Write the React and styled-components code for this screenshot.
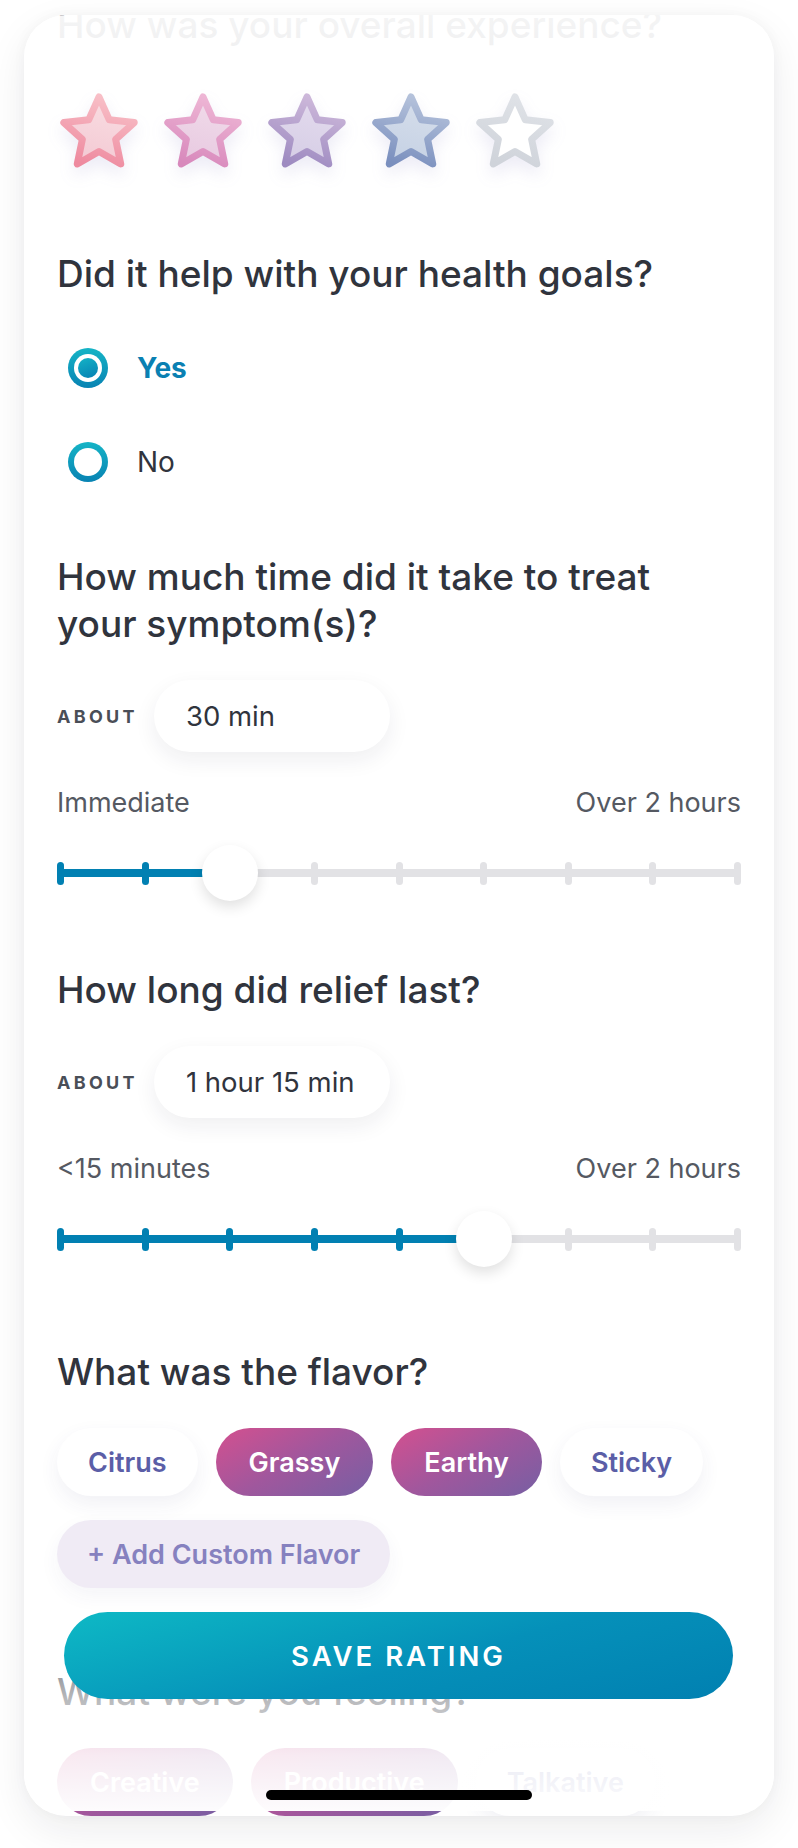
import React from 'react'
import styled, { createGlobalStyle } from 'styled-components'

const GlobalStyle = createGlobalStyle`
  html, body {
    margin: 0;
    padding: 0;
    background: #ffffff;
  }
  body {
    font-family: Inter, "Noto Sans", "Liberation Sans", sans-serif;
    color: #30343d;
    -webkit-font-smoothing: antialiased;
  }
  * { box-sizing: border-box; }
`

const BLUE = '#0180b2'
const GREY = '#e2e2e5'

const stars = [
  { stroke: ['#f8bfc7', '#ee8a9f'], fill: ['#f9dde2', '#f3c9d3'] },
  { stroke: ['#eeb6d5', '#d889bc'], fill: ['#f1dbea', '#e7c9e0'] },
  { stroke: ['#cdb8da', '#9e8bc1'], fill: ['#e4dbee', '#d5cde5'] },
  { stroke: ['#b5c2db', '#7a8fbe'], fill: ['#d6deeb', '#c5d1e4'] },
  { stroke: ['#dfe2e7', '#cfd3da'], fill: ['#ffffff', '#ffffff'] },
]

const starPoints = (cx, cy, R, r) => {
  const pts = []
  for (let i = 0; i < 10; i++) {
    const rad = i % 2 === 0 ? R : r
    const a = (Math.PI / 5) * i
    pts.push(`${(cx + rad * Math.sin(a)).toFixed(2)},${(cy - rad * Math.cos(a)).toFixed(2)}`)
  }
  return pts.join(' ')
}

const flavors = [
  { name: 'Citrus', on: false },
  { name: 'Grassy', on: true },
  { name: 'Earthy', on: true },
  { name: 'Sticky', on: false },
]

const feelings = [
  { name: 'Creative', on: true },
  { name: 'Productive', on: true },
  { name: 'Talkative', on: false },
]

const Star = ({ idx, colors }) => (
  <StarSvg width="78" height="76" viewBox="0 0 78 76">
    <defs>
      <linearGradient id={`st${idx}`} x1="0.6" y1="0" x2="0.3" y2="1">
        <stop offset="0" stopColor={colors.stroke[0]} />
        <stop offset="1" stopColor={colors.stroke[1]} />
      </linearGradient>
      <linearGradient id={`sf${idx}`} x1="0.6" y1="0" x2="0.3" y2="1">
        <stop offset="0" stopColor={colors.fill[0]} />
        <stop offset="1" stopColor={colors.fill[1]} />
      </linearGradient>
    </defs>
    <polygon
      points={starPoints(39, 41, 37, 17.5)}
      fill={`url(#sf${idx})`}
      stroke={`url(#st${idx})`}
      strokeWidth="7"
      strokeLinejoin="round"
    />
  </StarSvg>
)

const Radio = ({ checked, label }) => (
  <Option>
    <RadioRing $checked={checked} />
    <OptionLabel $checked={checked}>{label}</OptionLabel>
  </Option>
)

const Slider = ({ value, steps = 9 }) => {
  const frac = value / (steps - 1)
  const pos = `calc(3.5px + (100% - 7px) * ${frac})`
  return (
    <SliderBox>
      <Ticks>
        <Fill style={{ width: pos }} />
        {Array.from({ length: steps }).map((_, i) => (
          <Tick key={i} $on={i <= value} />
        ))}
        <Thumb style={{ left: pos }} />
      </Ticks>
    </SliderBox>
  )
}

const TimeQuestion = ({ title, mt, amount, from, to, value }) => (
  <>
    <Heading $mt={mt}>{title}</Heading>
    <AboutRow>
      <AboutLabel>ABOUT</AboutLabel>
      <Pill>{amount}</Pill>
    </AboutRow>
    <RangeLabels>
      <span>{from}</span>
      <span>{to}</span>
    </RangeLabels>
    <Slider value={value} />
  </>
)

export default function App() {
  return (
    <>
      <GlobalStyle />
      <Card>
        <Content>
          <Heading $mt={-14}>How was your overall experience?</Heading>
          <StarRow>
            {stars.map((c, i) => (
              <Star key={i} idx={i} colors={c} />
            ))}
          </StarRow>

          <Heading $mt={81}>Did it help with your health goals?</Heading>
          <Options>
            <Radio checked label="Yes" />
            <Radio label="No" />
          </Options>

          <TimeQuestion
            mt={71}
            title="How much time did it take to treat your symptom(s)?"
            amount="30 min"
            from="Immediate"
            to="Over 2 hours"
            value={2}
          />

          <TimeQuestion
            mt={65}
            title="How long did relief last?"
            amount="1 hour 15 min"
            from="<15 minutes"
            to="Over 2 hours"
            value={5}
          />

          <Heading $mt={81}>What was the flavor?</Heading>
          <Chips>
            {flavors.map((f) => (
              <Chip key={f.name} $on={f.on}>{f.name}</Chip>
            ))}
            <AddChip>+ Add Custom Flavor</AddChip>
          </Chips>

          <Heading $mt={80}>What were you feeling?</Heading>
          <Chips>
            {feelings.map((f) => (
              <Chip key={f.name} $on={f.on}>{f.name}</Chip>
            ))}
          </Chips>
        </Content>

        <TopFade />
        <BottomFade />
        <Footer>
          <SaveButton>SAVE RATING</SaveButton>
          <HomeBar />
        </Footer>
      </Card>
    </>
  )
}

const Card = styled.div`
  position: relative;
  margin: 15px 24px 32px;
  height: 1801px;
  border-radius: 42px;
  background: #ffffff;
  overflow: hidden;
  box-shadow: 0 14px 40px rgba(20, 20, 40, 0.08), 0 0 14px rgba(20, 20, 40, 0.035);
`

const Content = styled.div`
  padding: 0 33px;
`

const Heading = styled.h2`
  margin: ${(p) => p.$mt || 0}px 0 0;
  max-width: 640px;
  font-size: 37px;
  line-height: 47px;
  font-weight: 500;
  color: #30343d;
`

const StarRow = styled.div`
  display: flex;
  gap: 26px;
  margin-top: 45px;
  padding-left: 3px;
`

const StarSvg = styled.svg`
  display: block;
  filter: drop-shadow(0 8px 8px rgba(110, 100, 180, 0.12));
`

const Options = styled.div`
  display: flex;
  flex-direction: column;
  gap: 54px;
  margin-top: 51px;
  padding-left: 11px;
`

const Option = styled.div`
  display: flex;
  align-items: center;
  gap: 29px;
  height: 40px;
`

const RadioRing = styled.span`
  position: relative;
  width: 40px;
  height: 40px;
  border-radius: 50%;
  background: linear-gradient(180deg, #15b4c6, #0883b3);
  flex-shrink: 0;

  &::before {
    content: '';
    position: absolute;
    inset: 6px;
    border-radius: 50%;
    background: #ffffff;
  }

  &::after {
    content: '';
    display: ${(p) => (p.$checked ? 'block' : 'none')};
    position: absolute;
    inset: 10px;
    border-radius: 50%;
    background: linear-gradient(160deg, #14b3c6, #0680b3);
  }
`

const OptionLabel = styled.span`
  font-size: 28px;
  font-weight: ${(p) => (p.$checked ? 700 : 400)};
  color: ${(p) => (p.$checked ? '#0a80b2' : '#30343d')};
`

const AboutRow = styled.div`
  display: flex;
  align-items: center;
  gap: 16px;
  margin-top: 33px;
`

const AboutLabel = styled.span`
  font-size: 18px;
  font-weight: 700;
  letter-spacing: 3.3px;
  color: #4a4e57;
`

const Pill = styled.div`
  width: 236px;
  height: 72px;
  border-radius: 36px;
  background: #ffffff;
  box-shadow: 0 8px 22px rgba(30, 30, 60, 0.07);
  display: flex;
  align-items: center;
  padding-left: 32px;
  font-size: 27.5px;
  color: #30343d;
`

const RangeLabels = styled.div`
  display: flex;
  justify-content: space-between;
  margin-top: 35px;
  font-size: 27px;
  line-height: 32px;
  color: #555962;
`

const SliderBox = styled.div`
  height: 56px;
  display: flex;
  align-items: center;
  margin-top: 26px;
`

const Ticks = styled.div`
  position: relative;
  flex: 1;
  height: 23px;
  display: flex;
  align-items: center;
  justify-content: space-between;

  &::before {
    content: '';
    position: absolute;
    left: 0;
    right: 0;
    top: 50%;
    height: 8px;
    margin-top: -4px;
    background: ${GREY};
    border-radius: 4px;
  }
`

const Fill = styled.div`
  position: absolute;
  left: 0;
  top: 50%;
  height: 8px;
  margin-top: -4px;
  background: ${BLUE};
  border-radius: 4px 0 0 4px;
`

const Tick = styled.span`
  position: relative;
  width: 7px;
  height: 23px;
  border-radius: 4px;
  background: ${(p) => (p.$on ? BLUE : GREY)};
`

const Thumb = styled.span`
  position: absolute;
  top: 50%;
  width: 56px;
  height: 56px;
  margin: -28px 0 0 -28px;
  border-radius: 50%;
  background: #ffffff;
  box-shadow: 0 6px 14px rgba(0, 0, 0, 0.12);
  z-index: 2;
`

const Chips = styled.div`
  display: flex;
  flex-wrap: wrap;
  gap: 24px 18px;
  margin-top: 33px;
`

const Chip = styled.div`
  height: 68px;
  padding: 0 ${(p) => (p.$on ? 33 : 31)}px;
  border-radius: 34px;
  display: flex;
  align-items: center;
  font-size: 27px;
  font-weight: 600;
  color: ${(p) => (p.$on ? '#ffffff' : '#5b5ea7')};
  background: ${(p) => (p.$on ? 'linear-gradient(150deg, #d4508f 0%, #a0579d 50%, #765fa3 100%)' : '#ffffff')};
  box-shadow: ${(p) => (p.$on ? 'none' : '0 8px 20px rgba(60, 50, 120, 0.07)')};
`

const AddChip = styled(Chip)`
  padding: 0 30px;
  background: #f0ebf5;
  color: #8681bf;
  box-shadow: 0 8px 20px rgba(60, 50, 120, 0.05);
`

const TopFade = styled.div`
  position: absolute;
  left: 0;
  right: 0;
  top: 0;
  height: 74px;
  pointer-events: none;
  background: linear-gradient(180deg, rgba(255, 255, 255, 0.95) 0%, rgba(255, 255, 255, 0.93) 45%, rgba(255, 255, 255, 0) 100%);
`

const BottomFade = styled.div`
  position: absolute;
  left: 0;
  right: 0;
  bottom: 5px;
  height: 222px;
  pointer-events: none;
  background: linear-gradient(
    180deg,
    rgba(255, 255, 255, 0) 0%,
    rgba(255, 255, 255, 0.66) 50%,
    rgba(255, 255, 255, 0.88) 75%,
    rgba(255, 255, 255, 0.98) 100%
  );
`

const Footer = styled.div`
  position: absolute;
  left: 0;
  right: 0;
  bottom: 0;
  display: flex;
  flex-direction: column;
  align-items: center;
  padding: 0 41px 16px 40px;
`

const SaveButton = styled.button`
  width: 100%;
  height: 87px;
  border: none;
  border-radius: 44px;
  background: linear-gradient(165deg, #0eb9c5 0%, #0590b9 55%, #0180b1 100%);
  color: #ffffff;
  font-family: inherit;
  font-size: 27.5px;
  font-weight: 600;
  letter-spacing: 3px;
  cursor: pointer;
`

const HomeBar = styled.div`
  width: 266px;
  height: 10px;
  margin-top: 91px;
  border-radius: 5px;
  background: #000000;
`
